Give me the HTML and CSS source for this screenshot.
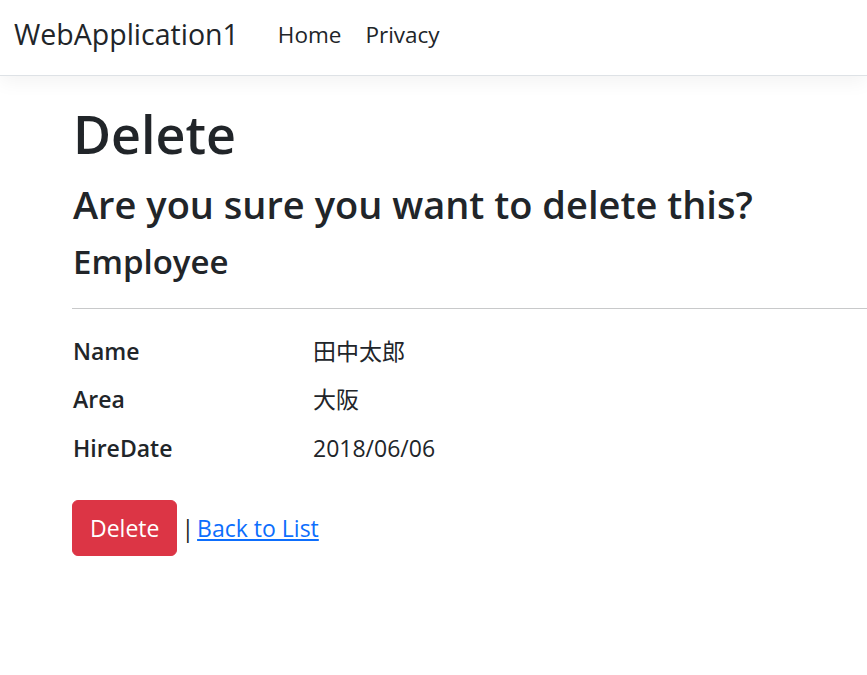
FILE: index.html
```html
<!DOCTYPE html>
<html lang="ja">
<head>
<meta charset="utf-8">
<title>Delete - WebApplication1</title>
<link rel="stylesheet" href="styles.css">
</head>
<body>
<header class="navbar">
  <a class="brand" href="#">WebApplication1</a>
  <nav class="nav-links">
    <a class="nav-link" href="#">Home</a>
    <a class="nav-link" href="#">Privacy</a>
  </nav>
</header>
<main class="content">
  <h1 class="title">Delete</h1>
  <h3 class="question">Are you sure you want to delete this?</h3>
  <div>
    <h4 class="entity">Employee</h4>
    <hr class="divider">
    <dl class="details">
      <dt>Name</dt>
      <dd>田中太郎</dd>
      <dt>Area</dt>
      <dd>大阪</dd>
      <dt>HireDate</dt>
      <dd>2018/06/06</dd>
    </dl>
    <form class="actions">
      <button type="button" class="btn-danger">Delete</button>
      <span class="sep">|</span>
      <a class="back-link" href="#">Back to List</a>
    </form>
  </div>
</main>
</body>
</html>
```
FILE: styles.css
```css
html, body {
  margin: 0;
  padding: 0;
}
body {
  font-family: "Open Sans", "Noto Sans CJK JP", sans-serif;
  font-size: 23px;
  color: #212529;
  background: #fff;
  overflow: hidden;
}
.navbar {
  height: 76px;
  box-sizing: border-box;
  padding: 0 0 7px 14px;
  border-bottom: 1px solid #dee2e6;
  box-shadow: 0 6px 18px rgba(0, 0, 0, 0.05);
  display: flex;
  align-items: center;
}
.brand {
  font-size: 28.5px;
  color: #212529;
  text-decoration: none;
  margin-right: 27px;
}
.nav-links {
  display: flex;
}
.nav-link {
  font-size: 22.5px;
  color: #212529;
  text-decoration: none;
  padding: 0 12px;
}
.content {
  padding: 27px 0 0 73px;
}
.title {
  font-size: 52px;
  font-weight: 600;
  line-height: 1.2;
  margin: 0 0 17px;
}
.question {
  font-size: 38px;
  font-weight: 600;
  line-height: 1.2;
  margin: 0 0 14px;
}
.entity {
  font-size: 33px;
  font-weight: 600;
  line-height: 1.2;
  margin: 0 0 26px;
}
.divider {
  border: 0;
  border-top: 1px solid #c8c9ca;
  margin: 0 0 25px -1px;
}
.details {
  display: grid;
  grid-template-columns: 240px 1fr;
  row-gap: 14px;
  margin: 0 0 35px;
  line-height: 1.5;
}
.details dt {
  font-weight: 600;
  margin: 0;
}
.details dd {
  margin: 0;
}
.actions {
  display: flex;
  align-items: baseline;
}
.btn-danger {
  font-family: inherit;
  font-size: 23px;
  line-height: 1.5;
  color: #fff;
  background: #dc3545;
  border: 1px solid #dc3545;
  border-radius: 6px;
  padding: 10px 17px 9px;
  margin-left: -1px;
}
.sep {
  margin: 0 3px 0 4px;
  color: #212529;
}
.back-link {
  color: #0d6efd;
  text-decoration: underline;
}
```
